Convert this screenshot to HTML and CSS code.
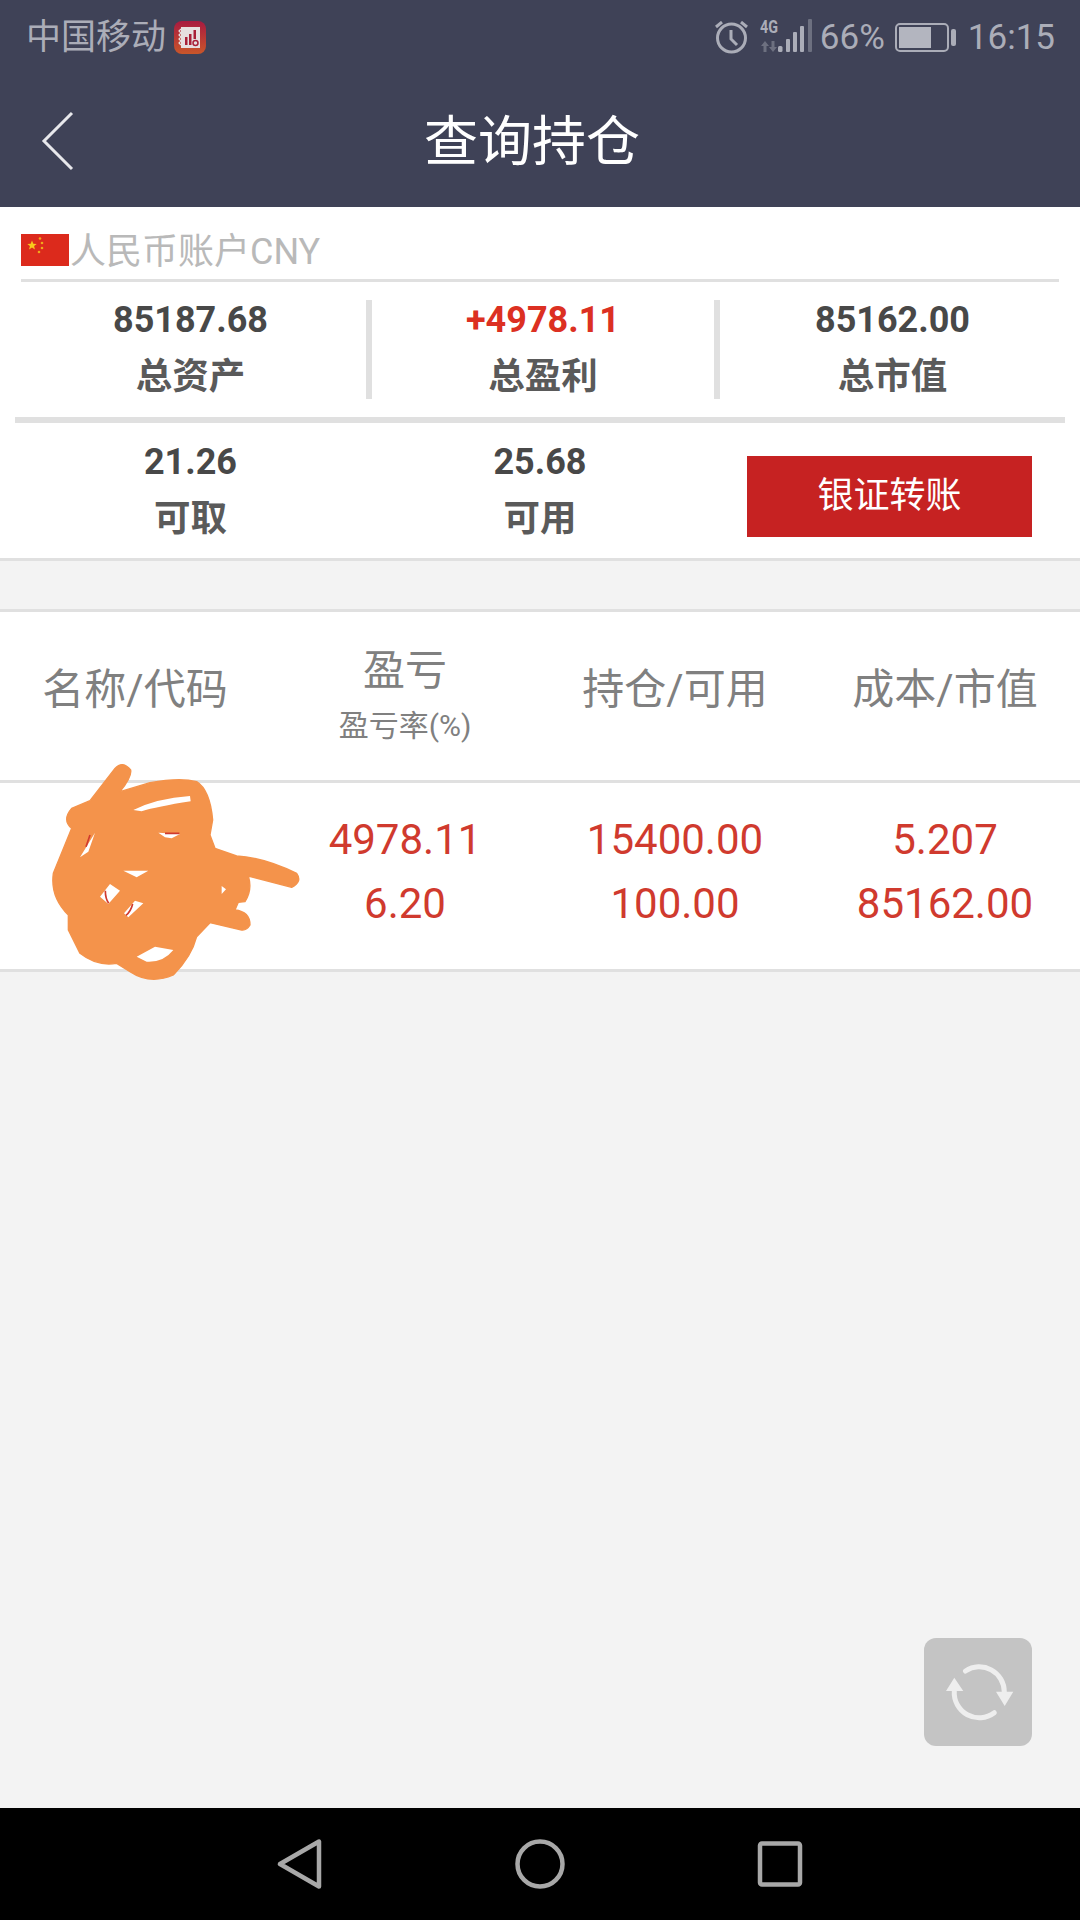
FILE: index.html
```html
<!DOCTYPE html>
<html lang="zh-CN">
<head>
    <meta charset="UTF-8">
    <meta name="viewport" content="width=device-width, initial-scale=1.0">
    <title>查询持仓</title>
    <link rel="stylesheet" href="styles.css">
</head>
<body>
    <div class="app">
        <header class="topbar">
            <div class="status">
                <span class="carrier">中国移动</span>
                <svg class="app-badge" width="32" height="33" viewBox="0 0 32 33">
                    <defs>
                        <linearGradient id="badgeFill" x1="0" y1="0" x2="0" y2="1">
                            <stop offset="0" stop-color="#a81a40"/>
                            <stop offset="1" stop-color="#c9562a"/>
                        </linearGradient>
                    </defs>
                    <rect width="32" height="33" rx="8" fill="url(#badgeFill)"/>
                    <rect x="7" y="6" width="19" height="21" fill="#e6dfe0"/>
                    <path d="M7 8l-2 2 2 2-2 2 2 2-2 2 2 2-2 2 2 2" fill="none" stroke="#e6dfe0" stroke-width="1.2"/>
                    <path d="M11 16h2.500v8H11zM15 13h2.500v11H15zM19.500 9H22v9h-2.500z" fill="#a82038"/>
                    <circle cx="21.500" cy="22" r="2.500" fill="none" stroke="#a82038" stroke-width="1.500"/>
                </svg>
                <div class="status-right">
                    <svg class="alarm" width="33" height="33" viewBox="0 0 33 33">
                        <circle cx="16.500" cy="17" r="14" fill="none" stroke="#abadb8" stroke-width="3"/>
                        <path d="M16 9v9l6 6" fill="none" stroke="#abadb8" stroke-width="3"/>
                        <path d="M1 6l6-5M32 6l-6-5" fill="none" stroke="#abadb8" stroke-width="3"/>
                    </svg>
                    <svg class="signal" width="53" height="53" viewBox="0 11 53 53">
                        <text class="net-type" x="0" y="33" textLength="18" lengthAdjust="spacingAndGlyphs">4G</text>
                        <path d="M5 41l-4 5h2.500v6h3v-6H9zM13 52l4-5h-2.500v-6h-3v6H9z" fill="#6d7080"/>
                        <rect x="18" y="46" width="4.500" height="6" rx="1.500" fill="#abadb8"/>
                        <rect x="26" y="39" width="4" height="13" rx="1" fill="#abadb8"/>
                        <rect x="33" y="32" width="4" height="20" rx="1" fill="#abadb8"/>
                        <rect x="40" y="26" width="4" height="26" rx="1" fill="#abadb8"/>
                        <rect x="48" y="19" width="4" height="33" rx="1" fill="#6d7080"/>
                    </svg>
                    <span class="percent">66%</span>
                    <svg class="battery" width="61" height="29" viewBox="0 0 61 29">
                        <rect x="1" y="1" width="52" height="27" rx="4" fill="none" stroke="#abadb8" stroke-width="2"/>
                        <rect x="4" y="4" width="32" height="21" fill="#b3b5bf"/>
                        <rect x="56" y="6" width="5" height="17" rx="2" fill="#abadb8"/>
                    </svg>
                    <span class="clock">16:15</span>
                </div>
            </div>
            <div class="titlebar">
                <svg class="back" width="33" height="60" viewBox="0 0 33 60">
                    <path d="M31 2L3 30l28 28" fill="none" stroke="#e8e8ec" stroke-width="3"/>
                </svg>
                <h1 class="title">查询持仓</h1>
            </div>
        </header>

        <main class="content">
            <section class="account">
                <div class="account-head">
                    <svg class="flag" width="48" height="32" viewBox="0 0 48 32">
                        <rect width="48" height="32" fill="#dc2a1c"/>
                        <path d="M11 6.500l1.300 3.200 3.400.2-2.600 2.200.8 3.300-2.900-1.800-2.900 1.800.8-3.300-2.600-2.200 3.400-.2z" fill="#f8c81c"/>
                        <circle cx="19" cy="4.500" r="1.300" fill="#f0a81c"/>
                        <circle cx="21" cy="9" r="1.300" fill="#f0a81c"/>
                        <circle cx="21" cy="14" r="1.300" fill="#f0a81c"/>
                        <circle cx="18" cy="18" r="1.300" fill="#f0a81c"/>
                    </svg>
                    <span class="account-name">人民币账户CNY</span>
                </div>
                <div class="stats">
                    <div class="stat stat-wide">
                        <div class="stat-num">85187.68</div>
                        <div class="stat-label">总资产</div>
                    </div>
                    <div class="stat stat-mid">
                        <div class="stat-num stat-red">+4978.11</div>
                        <div class="stat-label">总盈利</div>
                    </div>
                    <div class="stat stat-last">
                        <div class="stat-num">85162.00</div>
                        <div class="stat-label">总市值</div>
                    </div>
                </div>
                <div class="funds">
                    <div class="stat stat-wide">
                        <div class="stat-num">21.26</div>
                        <div class="stat-label">可取</div>
                    </div>
                    <div class="stat stat-funds">
                        <div class="stat-num">25.68</div>
                        <div class="stat-label">可用</div>
                    </div>
                    <button class="transfer" type="button">银证转账</button>
                </div>
            </section>

            <section class="positions">
                <div class="table-head">
                    <div class="head-cell head-plain">名称/代码</div>
                    <div class="head-cell">
                        <div>盈亏</div>
                        <div class="head-sub">盈亏率(%)</div>
                    </div>
                    <div class="head-cell head-plain">持仓/可用</div>
                    <div class="head-cell head-plain">成本/市值</div>
                </div>
                <div class="table-row">
                    <div class="cell"></div>
                    <div class="cell"><div>4978.11</div><div>6.20</div></div>
                    <div class="cell"><div>15400.00</div><div>100.00</div></div>
                    <div class="cell"><div>5.207</div><div>85162.00</div></div>
                    <svg class="scribble" width="340" height="260" viewBox="0 0 1020 780">
                        <path d="M345 85Q368 60 392 90Q396 110 360 155L450 128Q540 112 590 125Q630 150 638 240L630 285L645 325L710 348Q790 352 890 400Q908 425 875 442L745 408Q758 450 735 485L715 487L705 510Q750 515 750 555Q740 572 725 570L630 548L590 590Q575 650 520 705Q450 735 390 695L350 670Q290 680 240 640L205 570L205 525Q150 470 160 400L215 265Q185 240 215 205L270 182Z" fill="#f4934b" stroke="#f4934b" stroke-width="4" stroke-linejoin="round"/>
                        <path d="M400 210Q470 175 570 168L572 184Q470 200 425 214ZM475 278L540 282L515 295L495 292ZM240 352L285 278L265 335ZM370 392L445 392L410 412ZM330 432L360 452L325 492L300 470ZM405 482L430 490L385 532L372 520ZM410 650L465 620L520 630Q490 668 440 665ZM665 438L678 448L665 462Z" fill="#fff"/>
                        <path d="M270 285L258 320M495 280H538M316 452Q316 475 326 490M398 492Q392 515 378 526" fill="none" stroke="#d03a2e" stroke-width="5"/>
                    </svg>
                </div>
            </section>

            <div class="refresh">
                <svg width="108" height="108" viewBox="0 0 108 108">
                    <path d="M41.500 33A25 25 0 0 1 80.300 54M70.300 74.700A25 25 0 0 1 30.300 53" fill="none" stroke="#eeeeee" stroke-width="5" stroke-linecap="round"/>
                    <path d="M72 53.700h17.300L80.700 68zM22 53h17.300L30.300 39.700z" fill="#eeeeee"/>
                </svg>
            </div>
        </main>

        <footer class="navbar">
            <svg width="50" height="50" viewBox="0 0 50 50">
                <path d="M5 25L44 2.500V47.500z" fill="none" stroke="#a8a8a8" stroke-width="4.500" stroke-linejoin="round"/>
            </svg>
            <svg width="50" height="50" viewBox="0 0 50 50">
                <circle cx="25" cy="25" r="22.500" fill="none" stroke="#a8a8a8" stroke-width="4.500"/>
            </svg>
            <svg width="50" height="50" viewBox="0 0 50 50">
                <rect x="5" y="4.500" width="40" height="41" rx="2" fill="none" stroke="#a8a8a8" stroke-width="4.500"/>
            </svg>
        </footer>
    </div>
</body>
</html>
```

FILE: styles.css
```css
* {
    box-sizing: border-box;
}
body {
    margin: 0;
    font-family: Roboto, "Noto Sans CJK SC", sans-serif;
    background-color: #f3f3f3;
}
.app {
    width: 1080px;
    height: 1920px;
    display: flex;
    flex-direction: column;
    overflow: hidden;
}

/* top bar */
.topbar {
    height: 207px;
    background-color: #3f4257;
}
.status {
    height: 75px;
    padding: 0 25px 0 26px;
    display: flex;
    align-items: center;
    color: #abadb8;
    font-size: 35px;
}
.carrier {
    font-size: 35px;
    line-height: 73px;
}
.app-badge {
    margin-left: 8px;
}
.status-right {
    margin-left: auto;
    display: flex;
    align-items: center;
}
.signal {
    margin-left: 12px;
}
.net-type {
    font-size: 19px;
    font-weight: 700;
    fill: #abadb8;
}
.percent {
    margin-left: 7px;
}
.battery {
    margin-left: 10px;
}
.clock {
    margin-left: 12px;
}
.titlebar {
    height: 132px;
    display: flex;
    align-items: center;
}
.back {
    margin-left: 41px;
}
.title {
    flex: 1;
    margin: 0;
    padding: 0 90px 7px 0;
    text-align: center;
    font-size: 54px;
    font-weight: 400;
    color: #fff;
}

/* account summary */
.content {
    flex: 1;
    position: relative;
}
.account {
    padding: 0 15px;
    background: #fff;
    border-bottom: 3px solid #e0e0e0;
}
.account-head {
    height: 75px;
    margin: 0 6px;
    padding-top: 27px;
    display: flex;
    align-items: flex-start;
    border-bottom: 3px solid #e0e0e0;
}
.account-name {
    margin-left: 1px;
    font-size: 36px;
    line-height: 37px;
    color: #b9b9b9;
}
.stats {
    height: 99px;
    margin-top: 18px;
    display: flex;
}
.stat {
    text-align: center;
}
.stat-wide {
    width: 351px;
}
.stat-mid {
    width: 348px;
    border-left: 6px solid #e0e0e0;
}
.stat-last {
    width: 351px;
    border-left: 6px solid #e0e0e0;
}
.stat-funds {
    width: 348px;
}
.stat-num {
    height: 40px;
    line-height: 41px;
    font-size: 36px;
    font-weight: 700;
    color: #484848;
}
.stat-red {
    color: #dc3022;
}
.stat-label {
    margin-top: 12px;
    line-height: 50px;
    font-size: 36.500px;
    font-weight: 700;
    color: #5a5a5a;
}
.funds {
    height: 141px;
    margin-top: 18px;
    padding-top: 19px;
    display: flex;
    border-top: 6px solid #e0e0e0;
}
.transfer {
    width: 285px;
    height: 81px;
    margin: 14px 0 0 33px;
    padding: 0 0 10px;
    border: none;
    background-color: #c62222;
    color: #fff;
    font-family: inherit;
    font-size: 36px;
}

/* positions table */
.positions {
    margin-top: 48px;
    background: #fff;
    border-top: 3px solid #e0e0e0;
}
.table-head {
    height: 171px;
    display: grid;
    grid-template-columns: repeat(4, 270px);
    border-bottom: 3px solid #e0e0e0;
    color: #808080;
    font-size: 42px;
}
.head-cell {
    display: flex;
    flex-direction: column;
    align-items: center;
    justify-content: center;
    line-height: 48px;
}
.head-plain {
    padding-bottom: 12px;
}
.head-sub {
    margin-top: 11px;
    font-size: 30px;
    line-height: 40px;
}
.table-row {
    position: relative;
    height: 189px;
    padding-top: 25px;
    display: grid;
    grid-template-columns: repeat(4, 270px);
    border-bottom: 3px solid #e0e0e0;
    color: #d03a2e;
    font-size: 42px;
}
.cell {
    text-align: center;
    line-height: 64px;
}
.scribble {
    position: absolute;
    left: 0;
    top: -43px;
}

/* floating refresh */
.refresh {
    position: absolute;
    right: 48px;
    bottom: 62px;
    width: 108px;
    height: 108px;
    border-radius: 12px;
    background-color: #c4c4c4;
}
.refresh svg {
    display: block;
}

/* system nav */
.navbar {
    height: 112px;
    background-color: #000;
    display: flex;
    align-items: center;
    justify-content: center;
    gap: 190px;
}
```
